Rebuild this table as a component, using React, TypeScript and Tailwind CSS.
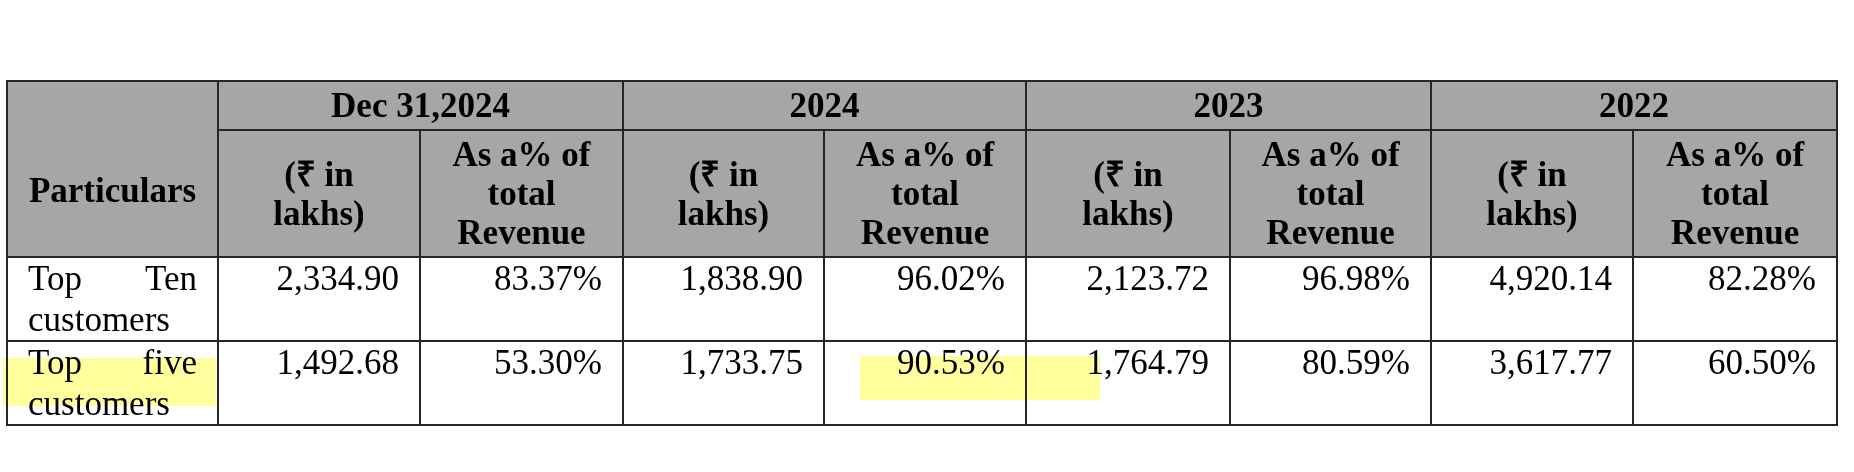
import React from "react";

type Row = {
  label: [string, string];
  values: string[];
};

const groups = ["Dec 31,2024", "2024", "2023", "2022"];

const rows: Row[] = [
  {
    label: ["Top Ten", "customers"],
    values: ["2,334.90", "83.37%", "1,838.90", "96.02%", "2,123.72", "96.98%", "4,920.14", "82.28%"],
  },
  {
    label: ["Top five", "customers"],
    values: ["1,492.68", "53.30%", "1,733.75", "90.53%", "1,764.79", "80.59%", "3,617.77", "60.50%"],
  },
];

const colWidths = [211, 202, 203, 201, 202, 204, 201, 202, 204];

const cell = "border-2 border-[#262626]";

const App = () => {
  return (
    <div className="min-h-[472px] bg-white pt-[80px] pl-[6px] font-['Liberation_Serif','Times_New_Roman',serif] text-black">
      <div className="relative w-fit">
        <table className="table-fixed border-collapse w-[1830px] text-[35px]">
          <colgroup>
            {colWidths.map((w, i) => (
              <col key={i} style={{ width: w }} />
            ))}
          </colgroup>
          <thead className="bg-[#a6a6a6] font-bold">
            <tr className="h-[49px]">
              <th rowSpan={2} className={`${cell} px-2 pt-[44px] align-middle leading-[40px]`}>
                Particulars
              </th>
              {groups.map((g) => (
                <th key={g} colSpan={2} className={`${cell} px-2 leading-[40px]`}>
                  {g}
                </th>
              ))}
            </tr>
            <tr className="h-[127px]">
              {groups.map((g) => (
                <React.Fragment key={g}>
                  <th className={`${cell} px-4 leading-[39px] align-middle`}>
                    (₹ in
                    <br />
                    lakhs)
                  </th>
                  <th className={`${cell} px-2 leading-[39px] align-middle`}>
                    As a% of
                    <br />
                    total
                    <br />
                    Revenue
                  </th>
                </React.Fragment>
              ))}
            </tr>
          </thead>
          <tbody>
            {rows.map((r) => (
              <tr key={r.label[0]} className="h-[83px]">
                <td className={`${cell} px-5 align-top leading-[41px]`}>
                  <p className="text-justify [text-align-last:left]">
                    {r.label[0]} {r.label[1]}
                  </p>
                </td>
                {r.values.map((v, i) => (
                  <td key={i} className={`${cell} px-5 align-top text-right leading-[41px]`}>
                    {v}
                  </td>
                ))}
              </tr>
            ))}
          </tbody>
        </table>

        {/* highlight marks laid over the pdf table */}
        <div className="pointer-events-none absolute left-[-3px] top-[278px] h-[48px] w-[213px] bg-[#ffff9e] mix-blend-multiply" />
        <div className="pointer-events-none absolute left-[854px] top-[276px] h-[44px] w-[240px] bg-[#ffff9e] mix-blend-multiply" />
      </div>
    </div>
  );
};

export default App;
